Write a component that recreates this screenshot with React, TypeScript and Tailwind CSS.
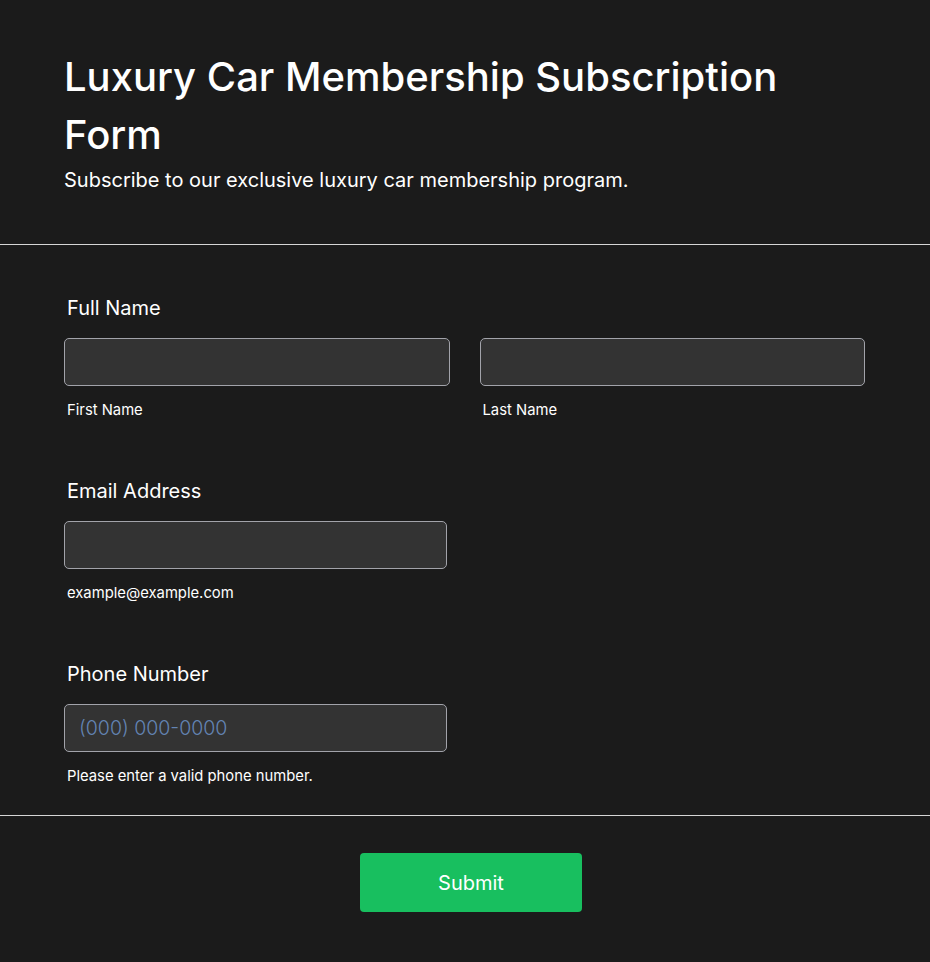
import React from 'react';

const Field: React.FC<{ label: string; children: React.ReactNode }> = ({ label, children }) => (
    <div className="flex flex-col">
        <label className="pl-[3px] text-xl leading-7 text-white">{label}</label>
        <div className="mt-4">{children}</div>
    </div>
);

const inputClass =
    'h-12 w-full rounded-[5px] border border-[#a2a3aa] bg-[#333333] px-3.5 text-[19.5px] font-light text-white outline-none placeholder:text-[#6384b3]';

const helpClass = 'mt-3.5 pl-[3px] text-[14.8px] leading-5 text-white';

export default function App() {
    return (
        <div className="min-h-[962px] bg-[#1b1b1b] text-white" style={{ fontFamily: 'Inter, "Noto Sans", sans-serif' }}>
            <header className="px-16 pt-12 pb-[50px]">
                <h1 className="text-[40px] leading-[57.6px] font-medium">Luxury Car Membership Subscription Form</h1>
                <p className="mt-[3px] text-xl leading-7">Subscribe to our exclusive luxury car membership program.</p>
            </header>

            <form className="border-y border-[#d6d6d6]">
                <div className="flex flex-col gap-[57px] px-16 pt-[49px] pb-[29px]">
                    <Field label="Full Name">
                        <div className="grid grid-cols-2 gap-[30px] pr-[1px]">
                            <div>
                                <input className={inputClass} />
                                <p className={helpClass}>First Name</p>
                            </div>
                            <div>
                                <input className={inputClass} />
                                <p className={helpClass}>Last Name</p>
                            </div>
                        </div>
                    </Field>

                    <Field label="Email Address">
                        <div className="w-[383px]">
                            <input type="email" className={inputClass} />
                            <p className={helpClass}>example@example.com</p>
                        </div>
                    </Field>

                    <Field label="Phone Number">
                        <div className="w-[383px]">
                            <input type="tel" placeholder="(000) 000-0000" className={inputClass} />
                            <p className={helpClass}>Please enter a valid phone number.</p>
                        </div>
                    </Field>
                </div>
            </form>

            <div className="flex justify-center pt-[37px] pb-[50px] pl-3">
                <button
                    type="button"
                    className="h-[59px] w-[222px] rounded bg-[#18bf5f] text-xl text-white"
                >
                    Submit
                </button>
            </div>
        </div>
    );
}
